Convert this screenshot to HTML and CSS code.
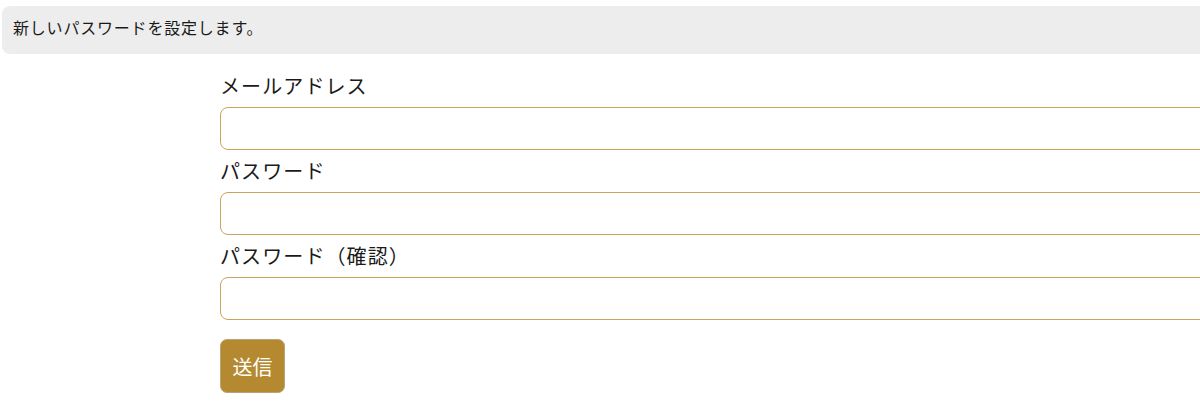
FILE: index.html
```html
<!DOCTYPE html>
<html lang="ja">
<head>
<meta charset="utf-8">
<title>パスワード再設定</title>
<link rel="stylesheet" href="styles.css">
</head>
<body>
<div class="notice">新しいパスワードを設定します。</div>
<form class="form">
  <label class="label" for="email">メールアドレス</label>
  <input class="input" id="email" type="email">
  <label class="label" for="pw">パスワード</label>
  <input class="input" id="pw" type="password">
  <label class="label" for="pw2">パスワード（確認）</label>
  <input class="input" id="pw2" type="password">
  <div class="actions">
    <button class="submit" type="button">送信</button>
  </div>
</form>
</body>
</html>
```

FILE: styles.css
```css
html, body {
  margin: 0;
  padding: 0;
  background: #fff;
  overflow: hidden;
}
body {
  font-family: "Noto Sans CJK JP", "Noto Sans", sans-serif;
  color: #1a1a1a;
  width: 1200px;
}
.notice {
  margin: 6px -20px 0 2px;
  height: 48px;
  box-sizing: border-box;
  padding: 9px 11px;
  background: #ededed;
  border-radius: 8px;
  font-size: 16px;
  letter-spacing: 0.8px;
  line-height: 24px;
}
.form {
  margin: 11px -40px 0 220px;
  display: flex;
  flex-direction: column;
}
.label {
  display: block;
  font-size: 20px;
  letter-spacing: 1.1px;
  line-height: 42px;
  height: 42px;
}
.input {
  display: block;
  box-sizing: border-box;
  height: 43px;
  width: 100%;
  margin: 0;
  border: 1px solid #c9a55c;
  border-radius: 8px;
  background: #fff;
  outline: none;
}
.actions {
  padding-top: 19px;
}
.submit {
  width: 65px;
  height: 54px;
  background: #b5892f;
  color: #fff;
  border: 1px solid #b8a47a;
  border-radius: 7px;
  font-family: "Noto Sans CJK JP", sans-serif;
  font-size: 20px;
  padding: 0;
}
```
